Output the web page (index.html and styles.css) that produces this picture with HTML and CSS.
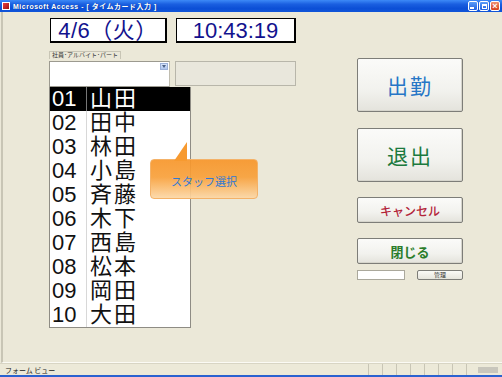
FILE: index.html
```html
<!DOCTYPE html>
<html lang="ja">
<head>
<meta charset="utf-8">
<title>タイムカード入力</title>
<link rel="stylesheet" href="styles.css">
</head>
<body>
<div class="window">
  <div class="titlebar">
    <span class="app-icon"></span>
    <span class="title-text">Microsoft Access - [ タイムカード入力 ]</span>
    <span class="controls">
      <span class="ctl ctl-min"><span class="min-bar"></span></span>
      <span class="ctl ctl-rest"><span class="rest-box"></span></span>
      <span class="ctl ctl-close">×</span>
    </span>
  </div>
  <div class="form">
    <div class="left-col">
      <div class="clock-row">
        <div class="clock-box date">4/6（火）</div>
        <div class="clock-box time">10:43:19</div>
      </div>
      <div class="field-label">社員･アルバイト･パート</div>
      <div class="input-row">
        <div class="combo"><span class="combo-arrow"></span></div>
        <div class="gray-box"></div>
      </div>
      <div class="list">
        <div class="row selected"><span class="num">01</span><span class="name">山田</span></div>
        <div class="row"><span class="num">02</span><span class="name">田中</span></div>
        <div class="row"><span class="num">03</span><span class="name">林田</span></div>
        <div class="row"><span class="num">04</span><span class="name">小島</span></div>
        <div class="row"><span class="num">05</span><span class="name">斉藤</span></div>
        <div class="row"><span class="num">06</span><span class="name">木下</span></div>
        <div class="row"><span class="num">07</span><span class="name">西島</span></div>
        <div class="row"><span class="num">08</span><span class="name">松本</span></div>
        <div class="row"><span class="num">09</span><span class="name">岡田</span></div>
        <div class="row"><span class="num">10</span><span class="name">大田</span></div>
      </div>
      <div class="callout">
        <svg class="callout-tail" width="16" height="20" viewBox="0 0 16 20"><polygon points="1,20 14,1 14,20" fill="#f79a30"/></svg>
        <span>スタッフ選択</span>
      </div>
    </div>
    <div class="right-col">
      <button class="btn big in">出勤</button>
      <button class="btn big out">退出</button>
      <button class="btn small cancel">キャンセル</button>
      <button class="btn small close">閉じる</button>
      <div class="admin-row">
        <div class="admin-input"></div>
        <button class="admin-btn">管理</button>
      </div>
    </div>
  </div>
  <div class="statusbar">
    <span class="status-text">フォーム ビュー</span>
    <span class="panels">
      <span class="panel"></span><span class="panel"></span><span class="panel"></span><span class="panel"></span><span class="panel"></span><span class="panel"></span><span class="panel"></span>
      <span class="panel num-panel"></span>
    </span>
  </div>
</div>
</body>
</html>
```
FILE: styles.css
```css
* { box-sizing: border-box; }
html, body { margin: 0; padding: 0; }
body {
  width: 502px;
  height: 377px;
  overflow: hidden;
  font-family: "Liberation Sans", "Noto Sans CJK JP", sans-serif;
  background: #ebe8d8;
}
.window {
  width: 502px;
  height: 377px;
  display: flex;
  flex-direction: column;
  background: #ebe8d8;
}
.titlebar {
  height: 12px;
  background: linear-gradient(#3d8af7 0%, #1a5fe0 35%, #0c4fd6 70%, #1055d8 100%);
  display: flex;
  align-items: center;
  padding-left: 2px;
  color: #fff;
}
.app-icon {
  width: 8px;
  height: 8px;
  background: linear-gradient(135deg, #e84040, #a01010);
  border: 1px solid #fff;
  margin-right: 3px;
}
.title-text {
  font-size: 7px;
  font-weight: bold;
  letter-spacing: 0.5px;
  white-space: nowrap;
  text-shadow: 1px 0 0 rgba(0,0,0,0.3);
}
.controls {
  margin-left: auto;
  display: flex;
  gap: 1px;
  padding-right: 2px;
}
.ctl {
  width: 10px;
  height: 10px;
  border: 1px solid #fff;
  border-radius: 2px;
  background: linear-gradient(#5a9cf8, #2060e0);
  position: relative;
  display: flex;
  align-items: center;
  justify-content: center;
  color: #fff;
  font-size: 9px;
  font-weight: bold;
  line-height: 1;
}
.min-bar { width: 4px; height: 2px; background: #fff; margin-top: 4px; margin-right: 2px; }
.rest-box { width: 5px; height: 5px; border: 1px solid #fff; border-top-width: 2px; }
.ctl-close { background: linear-gradient(#f09070, #d8401c); }

.form {
  flex: 1;
  display: flex;
  align-items: flex-start;
  border-left: 2px solid #c8c5b5;
  margin-left: 1px;
  padding-top: 6px;
  padding-left: 46px;
  border-bottom: 1px solid #fbfaf4;
}
.left-col {
  width: 247px;
  position: relative;
}
.clock-row {
  display: flex;
  gap: 9px;
  padding-left: 1px;
}
.clock-box {
  height: 25px;
  background: #fff;
  border: 1px solid #000;
  border-right-width: 2px;
  border-bottom-width: 2px;
  color: #12128e;
  font-size: 22px;
  line-height: 23px;
  text-align: center;
}
.date { width: 117px; letter-spacing: 0.5px; }
.time { width: 120px; }
.field-label {
  margin-top: 8px;
  display: inline-block;
  height: 8px;
  font-size: 6px;
  line-height: 7px;
  padding: 0 2px;
  border: 1px solid #c8c5b5;
  border-bottom: none;
  color: #333;
  white-space: nowrap;
}
.input-row {
  display: flex;
  gap: 5px;
}
.combo {
  width: 121px;
  height: 26px;
  background: #fff;
  border: 1px solid #9c9a90;
  border-right: 1px solid #c0bdb0;
  position: relative;
  display: flex;
  justify-content: flex-end;
  padding: 1px 1px 0 0;
}
.combo-arrow {
  width: 8px;
  height: 7px;
  background: linear-gradient(#d8e4fa, #b0c6ee);
  border: 1px solid #9cb0d8;
  position: relative;
}
.combo-arrow::after {
  content: "";
  position: absolute;
  left: 1px;
  top: 1px;
  border-left: 2px solid transparent;
  border-right: 2px solid transparent;
  border-top: 3px solid #4d6185;
}
.gray-box {
  width: 121px;
  height: 25px;
  background: #e9e7dc;
  border: 1px solid #b8b6aa;
}
.list {
  width: 142px;
  height: 241px;
  background: #fff;
  border: 1px solid #8e8c84;
  border-top: none;
}
.row {
  display: flex;
  height: 24px;
  font-size: 22px;
  line-height: 24px;
  color: #111;
}
.row .num {
  width: 37px;
  padding-left: 2px;
  border-right: 1px solid #d8d8d8;
}
.row .name {
  padding-left: 3px;
  letter-spacing: 2px;
}
.row.selected {
  background: #000;
  color: #fff;
}
.row.selected .num { border-right-color: #777; }
.callout {
  position: absolute;
  left: 101px;
  top: 141px;
  width: 108px;
  height: 40px;
  border-radius: 4px;
  border: 1px solid #f4b268;
  background: linear-gradient(rgba(247,150,42,0.92) 0%, rgba(248,160,58,0.92) 45%, rgba(252,215,165,0.92) 100%);
  display: flex;
  align-items: center;
  justify-content: center;
  padding-top: 3px;
  font-family: "Noto Sans CJK JP", sans-serif;
  font-size: 11px;
  color: #2f79d6;
}
.callout-tail {
  position: absolute;
  left: 22px;
  top: -19px;
}
.right-col {
  margin-left: 61px;
  padding-top: 40px;
  display: flex;
  flex-direction: column;
  width: 106px;
}
.btn {
  width: 106px;
  border: 1px solid #7d7d78;
  border-radius: 2px;
  background: linear-gradient(#fbfbf9 0%, #f2f2ee 60%, #e4e3dc 100%);
  box-shadow: inset -1px -1px 0 #d6d5cc;
  font-family: "Noto Sans CJK JP", sans-serif;
  padding: 0;
  margin: 0;
}
.big {
  height: 54px;
  font-size: 21px;
  letter-spacing: 2px;
}
.btn.in { color: #2676c6; }
.btn.out { color: #1c7a3e; margin-top: 16px; }
.small { height: 26px; }
.btn.cancel {
  margin-top: 15px;
  color: #b3253a;
  font-size: 12px;
  font-weight: 500;
}
.btn.close {
  margin-top: 15px;
  color: #2b7d2b;
  font-size: 13px;
  font-weight: bold;
}
.admin-row {
  display: flex;
  justify-content: space-between;
  margin-top: 6px;
  height: 10px;
}
.admin-input {
  width: 48px;
  height: 10px;
  background: #fff;
  border: 1px solid #aaa89c;
}
.admin-btn {
  width: 46px;
  height: 10px;
  padding: 0;
  margin: 0;
  border: 1px solid #7d7d78;
  border-radius: 2px;
  background: linear-gradient(#fafaf6, #e6e5dc);
  font-family: "Noto Sans CJK JP", sans-serif;
  font-size: 6px;
  line-height: 8px;
  color: #333;
}
.statusbar {
  height: 14px;
  display: flex;
  align-items: center;
  border-top: 1px solid #d8d5c4;
  border-bottom: 2px solid #2a62d0;
  background: #ece9d8;
  padding-left: 5px;
}
.status-text {
  font-family: "Noto Sans CJK JP", sans-serif;
  font-size: 7px;
  color: #222;
}
.panels {
  margin-left: auto;
  display: flex;
  height: 100%;
}
.panel {
  width: 14px;
  border-left: 1px solid #c8c5b5;
}
.num-panel {
  width: 36px;
  display: flex;
  justify-content: flex-end;
  align-items: center;
  padding-right: 4px;
}
.num-panel::after {
  content: "";
  width: 20px;
  height: 6px;
  background: #c8c6bc;
}
```
